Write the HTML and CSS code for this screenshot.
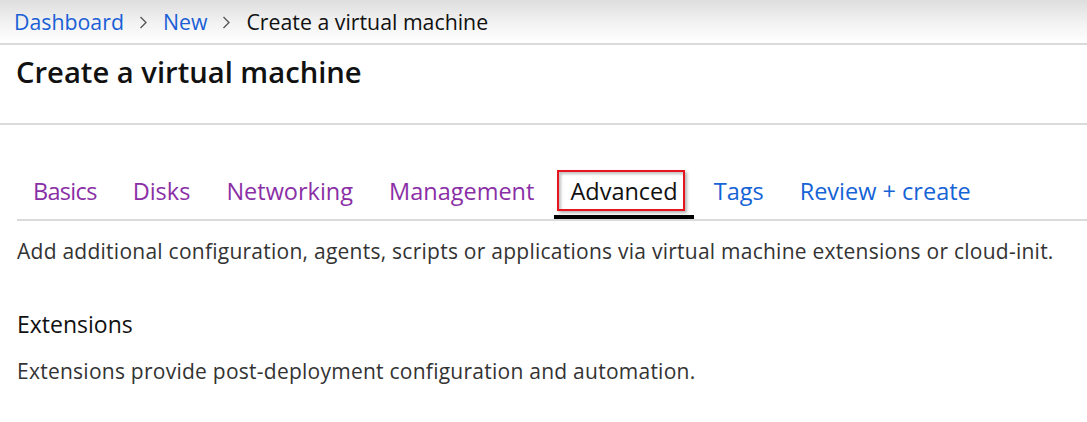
FILE: index.html
```html
<!DOCTYPE html>
<html>
<head>
<meta charset="utf-8">
<link rel="stylesheet" href="styles.css">
</head>
<body>
<nav class="crumbs">
  <a class="crumb-link" href="#">Dashboard</a>
  <svg class="chev" width="9" height="13" viewBox="0 0 9 13"><path d="M1.5 1 L7 6.5 L1.5 12" fill="none" stroke="#555" stroke-width="1.3"/></svg>
  <a class="crumb-link" href="#">New</a>
  <svg class="chev" width="9" height="13" viewBox="0 0 9 13"><path d="M1.5 1 L7 6.5 L1.5 12" fill="none" stroke="#555" stroke-width="1.3"/></svg>
  <span class="crumb-current">Create a virtual machine</span>
</nav>
<header class="title-bar">
  <h1 class="title">Create a virtual machine</h1>
</header>
<main class="content">
  <div class="tabs">
    <a class="tab visited tight" href="#">Basics</a>
    <a class="tab visited" href="#">Disks</a>
    <a class="tab visited" href="#">Networking</a>
    <a class="tab visited" href="#">Management</a>
    <a class="tab active" href="#">Advanced<span class="highlight"></span></a>
    <a class="tab link" href="#">Tags</a>
    <a class="tab link" href="#">Review + create</a>
  </div>
  <p class="desc first">Add additional configuration, agents, scripts or applications via virtual machine extensions or cloud-init.</p>
  <h2 class="section">Extensions</h2>
  <p class="desc second">Extensions provide post-deployment configuration and automation.</p>
</main>
</body>
</html>
```

FILE: styles.css
```css
html, body {
  margin: 0;
  padding: 0;
  background: #fff;
  font-family: "Open Sans", "Noto Sans", sans-serif;
}
.crumbs {
  height: 43px;
  border-bottom: 2px solid #dadada;
  background: linear-gradient(#dedede, #f3f3f3 55%, #fff);
  display: flex;
  align-items: center;
  padding-left: 14px;
  font-size: 21.3px;
  line-height: 28px;
}
.crumb-link {
  color: #1a5fd6;
  text-decoration: none;
}
.crumb-current {
  color: #111;
}
.chev {
  margin: 1px 15px 0 15px;
}
.title-bar {
  height: 78px;
  border-bottom: 2px solid #dadada;
}
.title {
  margin: 0;
  padding: 9px 0 0 16px;
  font-size: 29.2px;
  line-height: 36px;
  font-weight: 600;
  color: #111;
}
.content {
  padding: 0 0 0 17px;
}
.tabs {
  margin-top: 45px;
  display: flex;
  border-bottom: 2px solid #dadada;
}
.tab {
  position: relative;
  font-size: 23.5px;
  line-height: 30px;
  text-decoration: none;
  padding: 6px 16px 9px;
  margin-right: 4px;
  border-bottom: 4px solid transparent;
}
.tight {
  letter-spacing: -0.7px;
}
.visited { color: #8a2fa6; }
.link { color: #1563d6; }
.active {
  color: #111;
  border-bottom-color: #000;
}
.highlight {
  position: absolute;
  left: 3px;
  right: 9px;
  top: 0;
  bottom: 4px;
  border: 2px solid #e8141e;
  box-shadow: inset 2px 2px 3px rgba(0,0,0,0.25), 2px 2px 3px rgba(0,0,0,0.3);
}
.desc {
  margin: 0;
  font-size: 21px;
  line-height: 28px;
  letter-spacing: 0.25px;
  color: #333;
}
.first {
  margin-top: 16px;
}
.section {
  margin: 44px 0 0;
  font-size: 23px;
  line-height: 30px;
  font-weight: 400;
  color: #111;
}
.second {
  margin-top: 18px;
}
```
